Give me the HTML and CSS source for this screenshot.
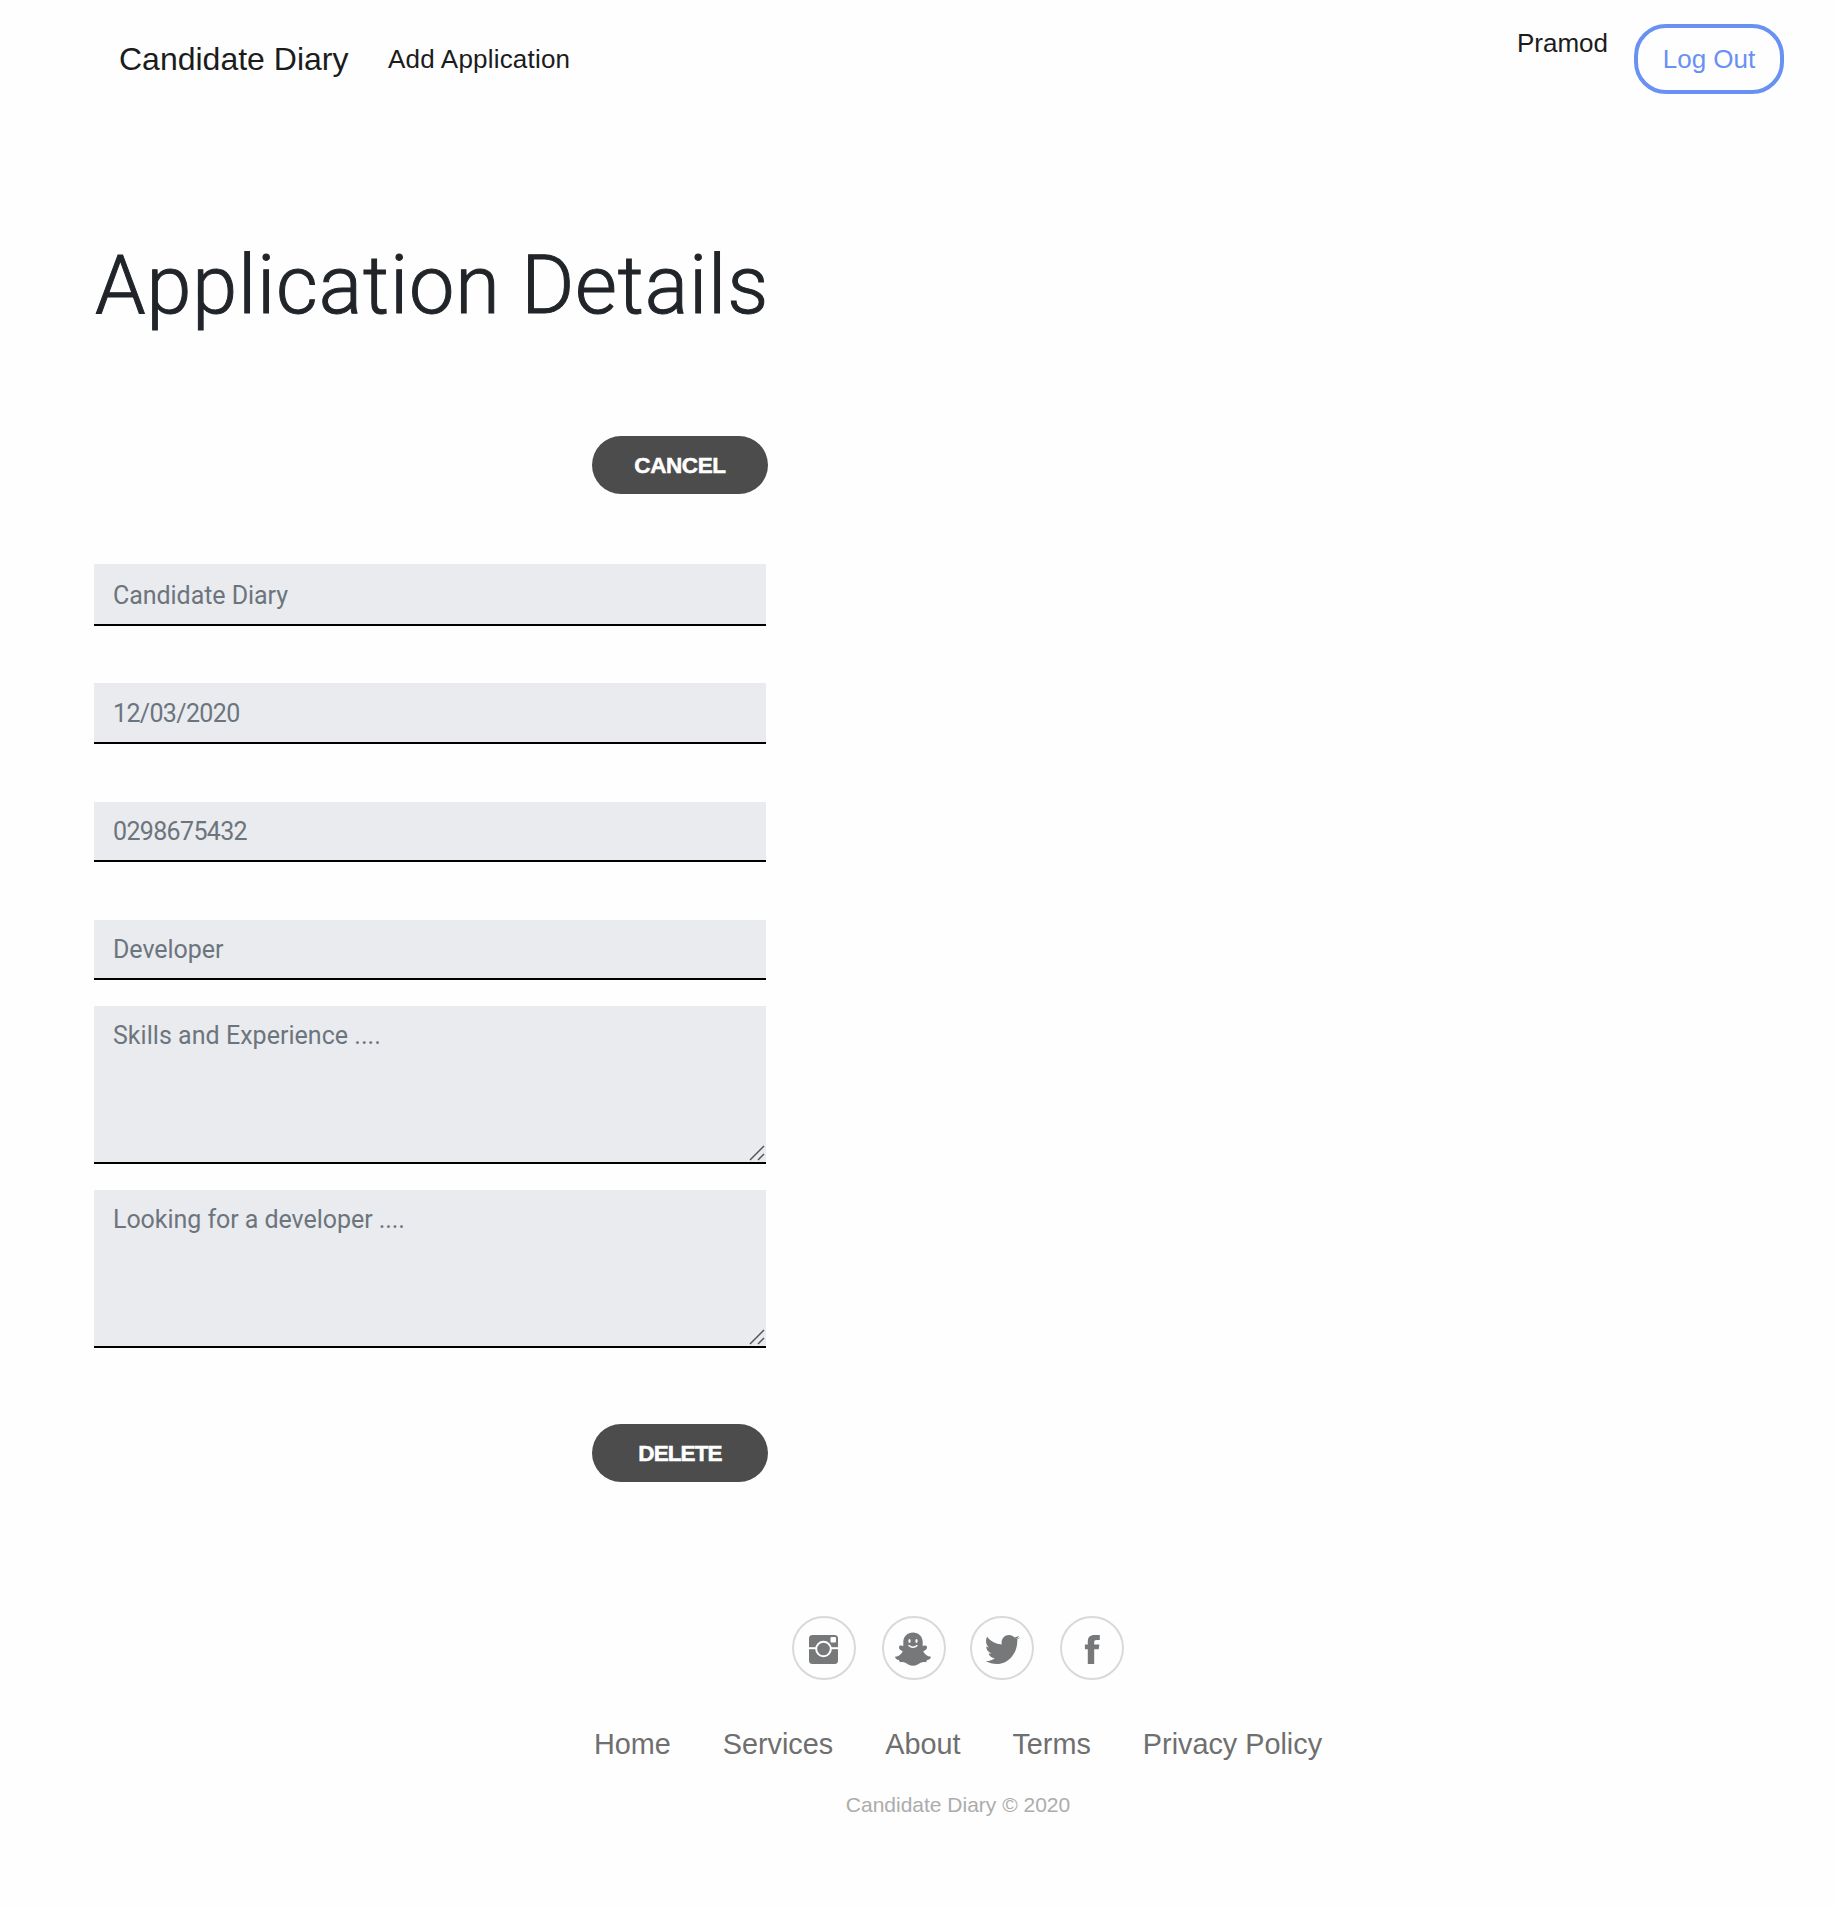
FILE: index.html
```html
<!DOCTYPE html>
<html lang="en">
<head>
<meta charset="utf-8">
<title>Candidate Diary</title>
<link rel="stylesheet" href="styles.css">
</head>
<body>
<header class="navbar">
  <a class="brand">Candidate Diary</a>
  <a class="nav-link">Add Application</a>
  <a class="user">Pramod</a>
  <a class="logout">Log Out</a>
</header>
<main class="details">
  <h1 class="title">Application Details</h1>
  <a class="pill cancel">CANCEL</a>
  <div class="fields">
    <div class="field first">Candidate Diary</div>
    <div class="field second numeric">12/03/2020</div>
    <div class="field numeric">0298675432</div>
    <div class="field">Developer</div>
    <div class="field area skills">Skills and Experience ....
      <svg class="grip" viewBox="0 0 16 16"><path d="M1 15 15 1M9 15l6-6" /></svg></div>
    <div class="field area">Looking for a developer ....
      <svg class="grip" viewBox="0 0 16 16"><path d="M1 15 15 1M9 15l6-6" /></svg></div>
  </div>
  <a class="pill delete">DELETE</a>
</main>
<footer class="footer">
  <div class="social">
    <a class="circle"><svg viewBox="0 0 64 64"><rect x="17" y="19" width="29" height="29" rx="3.5"/><path class="cut" d="M17 32.2h29"/><circle class="ring" cx="31.5" cy="33" r="7.3"/><rect class="hole" x="38.5" y="21" width="5.5" height="5.5" rx="1"/></svg></a>
    <a class="circle"><svg viewBox="0 0 64 64"><path d="M31 16.500c-5.500 0-9.700 4-9.700 9.500v4c-1.300-.8-4-.9-4.300 1-.3 2 1.500 3.500 3.800 4.200-1.300 3-4 5-7.800 5.600.3 2 1.800 3 4 3.200.3 1 .6 1.900 1.500 2.300 1.500-.6 3.200-.5 4.800.5 2.400 1.500 4.500 2.900 7.700 2.900s5.300-1.400 7.700-2.900c1.600-1 3.300-1.100 4.800-.5.900-.4 1.200-1.300 1.500-2.300 2.200-.2 3.700-1.200 4-3.200-3.800-.6-6.500-2.600-7.800-5.600 2.300-.7 4.100-2.200 3.800-4.200-.3-1.900-3-1.800-4.300-1v-4c0-5.500-4.200-9.500-9.700-9.500z"/><ellipse class="hole" cx="27.500" cy="25" rx="1.100" ry="1.900"/><ellipse class="hole" cx="34.500" cy="25" rx="1.100" ry="1.900"/><path class="smile" d="M26.500 29.300q4.500 4 9 0"/></svg></a>
    <a class="circle"><svg viewBox="0 0 64 64"><path d="M50 21.600c-.8.5-1.600.7-2.600.8.1.7 0 1.500-.1 2.500 0 12.500-9 23.100-20.300 23.100-4.200 0-8-1-11.300-3 3.400.2 6.600-.8 9.100-2.800-3.100-.2-5.400-2-6.300-4.700 1 .2 1.900.1 2.900-.2-3.200-1-5.100-3.500-5.200-6.700.9.5 1.900.8 2.900.8-3.200-2.500-3.900-6.300-2.100-10.600 3.900 4.700 8.700 7.300 14.700 7.700-.9-5.200 2.400-9.500 7.300-9.500 2.200 0 4.200.9 5.600 2.400 1.600-.3 2.900-.8 4.300-1.600-.5 1.500-1.400 2.500-2.600 3.300 1.300-.1 2.500-.5 3.700-1z"/></svg></a>
    <a class="circle"><svg viewBox="0 0 64 64"><path d="M27.800 48V33.200h-2.900v-4.600h2.900v-3c0-4.600 2.300-6.600 7-6.600h5v5h-3c-2.300 0-2.600.7-2.600 2.700v1.900h5.200l-.7 4.600h-4.500V48z"/></svg></a>
  </div>
  <nav class="links">
    <a>Home</a><a>Services</a><a>About</a><a>Terms</a><a>Privacy Policy</a>
  </nav>
  <p class="copy">Candidate Diary © 2020</p>
</footer>
</body>
</html>
```
FILE: styles.css
```css
* { box-sizing: border-box; }
body {
  margin: 0;
  height: 1908px;
  background: #fefefe;
  color: #1b1c1c;
  font-family: "Liberation Sans", Arial, sans-serif;
}
.navbar {
  display: flex;
  height: 118px;
  padding: 24px 50px 0 119px;
  font-size: 26px;
  line-height: 30px;
  white-space: nowrap;
}
.brand { width: 269px; padding-top: 17px; font-size: 32px; line-height: 36px; }
.nav-link { padding-top: 20px; letter-spacing: 0.2px; }
.user { margin-left: auto; padding-top: 4px; }
.logout {
  width: 150px;
  height: 70px;
  margin-left: 26px;
  padding-top: 16px;
  border: 4px solid #6990f3;
  border-radius: 32px;
  color: #6990f3;
  text-align: center;
}
.details { display: flex; flex-direction: column; width: 674px; margin-left: 94px; }
.title {
  margin: 120px 0 0 1px;
  height: 198px;
  color: #212529;
  font: 300 81px/96px Roboto, sans-serif;
  letter-spacing: 0.85px;
  -webkit-text-stroke: 1px #212529;
  white-space: nowrap;
}
.pill {
  display: flex;
  align-items: center;
  justify-content: center;
  align-self: flex-end;
  width: 176px;
  height: 58px;
  padding-top: 2px;
  border-radius: 29px;
  background: #4c4c4c;
  color: #fff;
  font-size: 22.5px;
  font-weight: 700;
  letter-spacing: -0.4px;
  -webkit-text-stroke: 0.5px #fff;
}
.fields { width: 672px; padding-top: 70px; }
.field {
  position: relative;
  height: 60px;
  margin-bottom: 58px;
  padding: 15px 20px 0 19px;
  border-bottom: 2px solid #000;
  background: #eaebef;
  color: #6c757d;
  font: 400 25px/30px Roboto, sans-serif;
  letter-spacing: -0.05px;
}
.numeric { letter-spacing: -0.65px; }
.first { height: 62px; margin-bottom: 57px; padding-top: 17px; }
.second { height: 61px; padding-top: 16px; }
.area { height: 158px; margin: -32px 0 58px; }
.skills { letter-spacing: 0.03px; }
.grip { position: absolute; right: 1.5px; bottom: 1px; width: 16px; height: 16px; fill: none; stroke: #555; stroke-width: 1.5; }
.delete { margin-top: 18px; letter-spacing: -0.9px; }
.footer { margin-top: 134px; padding-left: 82px; }
.social { display: flex; justify-content: center; gap: 26px; }
.circle { width: 64px; height: 64px; border: 2px solid #d9d9d9; border-radius: 50%; }
.circle:nth-child(3) { margin-left: -2px; }
.circle svg { display: block; width: 64px; height: 64px; margin: -2px; fill: #77787a; }
.circle .hole { fill: #fff; }
.circle .cut { stroke: #fff; stroke-width: 2; }
.circle .ring { stroke: #fff; stroke-width: 2; }
.circle .smile { fill: none; stroke: #fff; stroke-width: 1.3; }
.links { display: flex; justify-content: center; gap: 52px; margin-top: 47px; color: #6f6f6f; font-size: 28.8px; line-height: 34px; }
.copy { margin: 32px 0 0; text-align: center; color: #acacac; font-size: 21px; line-height: 24px; }
```
